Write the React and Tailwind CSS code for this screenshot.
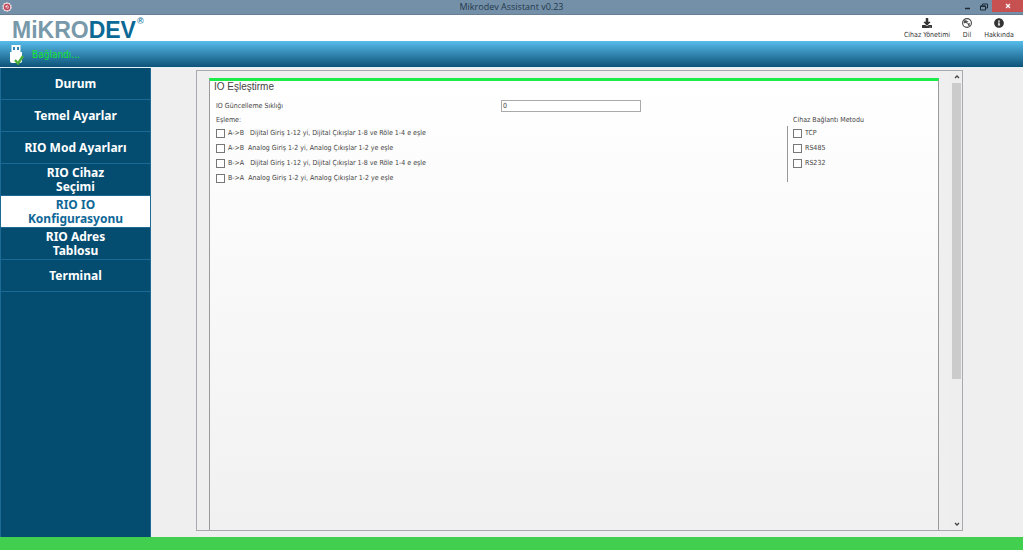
import React from "react";
import { FaDownload, FaInfoCircle } from "react-icons/fa";

const menuItems = [
    { id: 1, title: "Durum" },
    { id: 2, title: "Temel Ayarlar" },
    { id: 3, title: "RIO Mod Ayarları" },
    { id: 4, title: "RIO Cihaz\nSeçimi" },
    { id: 5, title: "RIO IO\nKonfigurasyonu", active: true },
    { id: 6, title: "RIO Adres\nTablosu" },
    { id: 7, title: "Terminal" },
];

const mappings = [
    { id: "ab-digital", direction: "A->B", gap: "gap-1.5", title: "Dijital Giriş 1-12 yi, Dijital Çıkışlar 1-8 ve Röle 1-4 e eşle" },
    { id: "ab-analog", direction: "A->B", gap: "gap-1", title: "Analog Giriş 1-2 yi, Analog Çıkışlar 1-2 ye eşle" },
    { id: "ba-digital", direction: "B->A", gap: "gap-1.5", title: "Dijital Giriş 1-12 yi, Dijital Çıkışlar 1-8 ve Röle 1-4 e eşle" },
    { id: "ba-analog", direction: "B->A", gap: "gap-1", title: "Analog Giriş 1-2 yi, Analog Çıkışlar 1-2 ye eşle" },
];

const methods = ["TCP", "RS485", "RS232"];

function TitleBar()
{
    return (
        <header className="relative flex h-[15px] items-center justify-between border-b border-[#677f95] bg-[#7490a8]">
            <svg className="ml-0.5 h-2.5 w-2.5" viewBox="0 0 20 20">
                <circle cx="10" cy="10" r="8" fill="#f3dfe3" stroke="#f3dfe3" strokeWidth="3" strokeDasharray="3 2" />
                <circle cx="10" cy="10" r="5" fill="none" stroke="#c2475a" strokeWidth="3" />
                <path d="M7 10l2 3 4-6" fill="none" stroke="#c2475a" strokeWidth="2" />
            </svg>
            <h1 className="absolute inset-x-0 text-center font-['Open_Sans',sans-serif] text-[9px] leading-[14px] text-[#22384c]">
                Mikrodev Assistant v0.23
            </h1>
            <div className="flex h-full">
                <button aria-label="Küçült" className="relative flex w-4 items-center justify-center">
                    <svg className="h-2 w-2" viewBox="0 0 8 8"><path d="M1 5.5h5" stroke="#1d2a36" strokeWidth="1.5" /></svg>
                </button>
                <button aria-label="Önceki boyut" className="relative flex w-4 items-center justify-center">
                    <svg className="h-2 w-2" viewBox="0 0 8 8" fill="none" stroke="#1d2a36">
                        <path d="M2.5 2V1h5v4H6M.5 3h5v4h-5z" />
                        <path d="M.5 3.2h5" strokeWidth="1.4" />
                    </svg>
                </button>
                <button aria-label="Kapat" className="relative flex h-3 w-[31px] items-center justify-center bg-[#c75050]">
                    <svg className="h-1.5 w-1.5" viewBox="0 0 6 6"><path d="M1 1l4 4M5 1L1 5" stroke="#fff" strokeWidth="1.2" /></svg>
                </button>
            </div>
        </header>
    );
}

function Toolbar()
{
    return (
        <div className="flex h-[26px] justify-between bg-white pl-3 pr-2">
            <div className="flex items-start font-['Liberation_Sans',sans-serif] text-[23px] font-bold leading-[30px]">
                <span className="text-[#7899aa]">MiKRO</span>
                <span className="text-[#0b6996]">DEV</span>
                <span className="ml-px text-[9px] leading-3 text-[#2b7ea6]">®</span>
            </div>
            <nav className="flex items-start gap-2 pt-[3px] text-[7px] leading-[10px] text-[#333]">
                <button className="flex w-12 flex-col items-center gap-0.5 whitespace-nowrap">
                    <FaDownload className="h-2.5 w-2.5" />
                    Cihaz Yönetimi
                </button>
                <button className="flex w-4 flex-col items-center gap-0.5">
                    <svg className="h-2.5 w-2.5" viewBox="0 0 20 20">
                        <circle cx="10" cy="10" r="8.8" fill="#fff" stroke="#444" strokeWidth="2.2" />
                        <path d="M3 8q2-4 5-4l2 2 3 1-2 2-4 1-2 1z" fill="#555" />
                        <path d="M12 11l4-1-1 4-3 2z" fill="#555" />
                        <path d="M4 5l12 11" stroke="#444" strokeWidth="1.6" />
                    </svg>
                    Dil
                </button>
                <button className="flex w-8 flex-col items-center gap-0.5">
                    <FaInfoCircle className="h-2.5 w-2.5" />
                    Hakkında
                </button>
            </nav>
        </div>
    );
}

function StatusBar()
{
    return (
        <div className="flex h-[26px] items-center gap-2 bg-linear-to-b from-[#57bdeb] to-[#0c5379] pl-2 pt-0.5">
            <svg className="h-5 w-4" viewBox="0 0 16 20">
                <path d="M3.5 0h9v7h-9z" fill="#fff" />
                <path d="M5 2h2v3H5zM9 2h2v3H9z" fill="#2f86b3" />
                <path d="M2 7h12v9q0 2-2 2H4q-2 0-2-2z" fill="#fff" />
                <path d="M7 15l3 3.5 5-7.5" fill="none" stroke="#4cae35" strokeWidth="2.4" />
            </svg>
            <p className="text-[10px] leading-4 text-[#16e62c]">Bağlandı...</p>
        </div>
    );
}

function SideMenu()
{
    return (
        <nav className="w-[151px] shrink-0 border-x border-[#1d6a94] bg-[#044d71]">
            {menuItems.map((item) => (
                <button
                    key={item.id}
                    className={`flex h-8 w-full items-center justify-center whitespace-pre-line border-b border-[#1d6a94] text-center font-['Noto_Sans',sans-serif] text-[12px] font-bold leading-[14px] ${item.active ? "bg-white text-[#0f6797]" : "text-white"}`}
                >
                    {item.title}
                </button>
            ))}
        </nav>
    );
}

function CheckBox({ id, children })
{
    return (
        <div className="flex h-[15px] items-center gap-[3px]">
            <input id={id} type="checkbox" className="h-[9px] w-[9px] appearance-none border border-[#777] bg-white checked:bg-[#777]" />
            <label htmlFor={id} className="flex">{children}</label>
        </div>
    );
}

function ConfigCard()
{
    return (
        <section className="min-w-0 flex-1 border-x border-t-[3px] border-x-[#9a9a9a] border-t-[#1cec4a] bg-linear-to-b from-white to-[#f1f1f1] text-[7px] leading-[11px] text-[#444]">
            <h2 className="pl-1 font-['Liberation_Sans',sans-serif] text-[10px] leading-3 text-[#444]">IO Eşleştirme</h2>
            <div className="mt-[7px] flex items-center pl-1.5">
                <label htmlFor="update-rate" className="w-[285px]">IO Güncelleme Sıklığı</label>
                <input id="update-rate" type="text" defaultValue="0" className="h-3 w-[140px] border border-[#aaa] bg-white px-px" />
            </div>
            <div className="mt-[3px] flex">
                <div className="flex-1 pl-1.5">
                    <p>Eşleme:</p>
                    {mappings.map((item) => (
                        <CheckBox key={item.id} id={item.id}>
                            <span className={`flex ${item.gap}`}>
                                <span>{item.direction}</span>
                                <span>{item.title}</span>
                            </span>
                        </CheckBox>
                    ))}
                </div>
                <div className="w-[151px]">
                    <p className="pl-1.5">Cihaz Bağlantı Metodu</p>
                    <div className="h-14 border-l border-[#999] pl-[5px]">
                        {methods.map((method) => (
                            <CheckBox key={method} id={method}>{method}</CheckBox>
                        ))}
                    </div>
                </div>
            </div>
        </section>
    );
}

function ScrollBar()
{
    return (
        <div className="ml-3 flex w-[11px] flex-col bg-[#eee] px-px">
            <button aria-label="Yukarı" className="flex h-3 items-center justify-center">
                <svg className="h-1.5 w-1.5" viewBox="0 0 6 6"><path d="M1 4l2-2 2 2" fill="none" stroke="#444" strokeWidth="1.3" /></svg>
            </button>
            <div className="flex-1">
                <div className="h-[68%] bg-[#cbcbcb]" />
            </div>
            <button aria-label="Aşağı" className="flex h-3 items-center justify-center">
                <svg className="h-1.5 w-1.5" viewBox="0 0 6 6"><path d="M1 2l2 2 2-2" fill="none" stroke="#444" strokeWidth="1.3" /></svg>
            </button>
        </div>
    );
}

export default function App()
{
    return (
        <div className="flex min-h-screen flex-col bg-[#efefef] font-['DejaVu_Sans_Condensed','Noto_Sans',sans-serif]">
            <TitleBar />
            <Toolbar />
            <StatusBar />
            <div className="flex flex-1 border-t border-[#e6f2f9]">
                <SideMenu />
                <main className="flex flex-1 pb-1.5 pl-[45px] pr-[60px] pt-0.5">
                    <div className="flex flex-1 border border-[#a6a9ae] pl-3">
                        <div className="flex min-w-0 flex-1 pt-[7px]">
                            <ConfigCard />
                        </div>
                        <ScrollBar />
                    </div>
                </main>
            </div>
            <footer className="h-[13px] bg-[#42cf50]" />
        </div>
    );
}
